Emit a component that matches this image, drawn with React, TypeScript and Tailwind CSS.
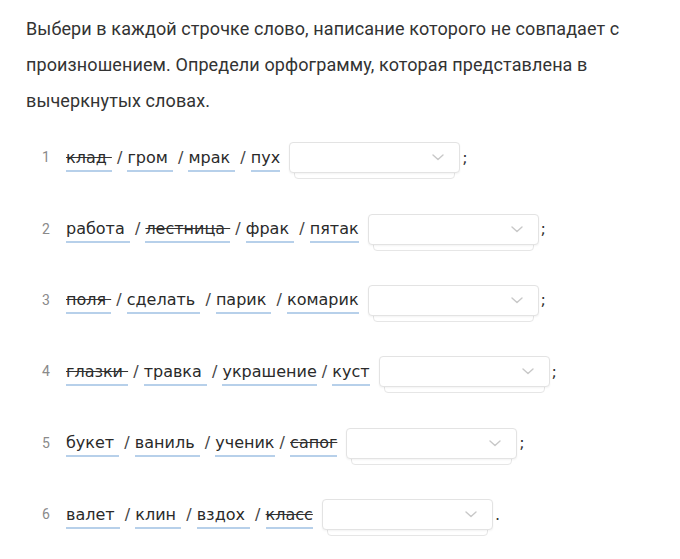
import React from "react";

type Row = { words: string[]; struck: number; end: string; tight?: number[] };

const rows: Row[] = [
  { words: ["клад", "гром", "мрак", "пух"], struck: 0, end: ";" },
  { words: ["работа", "лестница", "фрак", "пятак"], struck: 1, end: ";" },
  { words: ["поля", "сделать", "парик", "комарик"], struck: 0, end: ";" },
  { words: ["глазки", "травка", "украшение", "куст"], struck: 0, end: ";", tight: [2] },
  { words: ["букет", "ваниль", "ученик", "сапог"], struck: 3, end: ";", tight: [2] },
  { words: ["валет", "клин", "вздох", "класс"], struck: 3, end: "." },
];

function Chevron() {
  return (
    <svg width="12" height="7" viewBox="0 0 12 7" fill="none">
      <path d="M1 1l5 4.5L11 1" stroke="#c8c8c8" strokeWidth="1.4" strokeLinecap="round" strokeLinejoin="round" />
    </svg>
  );
}

function SelectBox() {
  return (
    <span className="relative inline-block align-middle ml-[9px] w-[171px] h-[31px]">
      <span className="absolute left-[5px] right-[5px] top-[6px] bottom-[-6px] rounded-[4px] border border-[#e6e6e6] bg-white" />
      <span className="absolute inset-0 rounded-[4px] border border-[#e3e3e3] bg-white shadow-[0_1px_2px_rgba(0,0,0,0.05)] flex items-center justify-end pr-[15px]">
        <Chevron />
      </span>
    </span>
  );
}

export default function App() {
  return (
    <div className="w-[680px] h-[559px] bg-white overflow-hidden pt-[11px] px-[26px]">
      <p className="text-[18px] leading-[36px] text-[#333] font-['Roboto',sans-serif] tracking-[0.1px] whitespace-nowrap">
        Выбери в каждой строчке слово, написание которого не совпадает с
        <br />
        произношением. Определи орфограмму, которая представлена в
        <br />
        вычеркнутых словах.
      </p>
      <div className="mt-[3px] flex flex-col font-['DejaVu_Sans',sans-serif] text-[16px] text-[#2a2a2a]">
        {rows.map((r, i) => (
          <div key={i} className="h-[71.4px] flex items-center pl-[16px]">
            <span className="w-[24px] text-[14px] text-[#8a8a8a] font-['Roboto',sans-serif]">{i + 1}</span>
            <span className="whitespace-nowrap leading-[24px]">
              {r.words.map((w, j) => {
                const last = j === r.words.length - 1;
                const tight = r.tight?.includes(j);
                return (
                  <React.Fragment key={j}>
                    <span
                      className={
                        "border-b-2 border-[#b7d0ea] pb-[3px] " + (j === r.struck ? "line-through decoration-[#333]" : "")
                      }
                    >
                      {last || tight ? w : w + "\u00a0"}
                    </span>
                    {!last && <span className="text-[#444]"> / </span>}
                  </React.Fragment>
                );
              })}
            </span>
            <SelectBox />
            <span className="ml-[2px] text-[#333]">{r.end}</span>
          </div>
        ))}
      </div>
    </div>
  );
}
